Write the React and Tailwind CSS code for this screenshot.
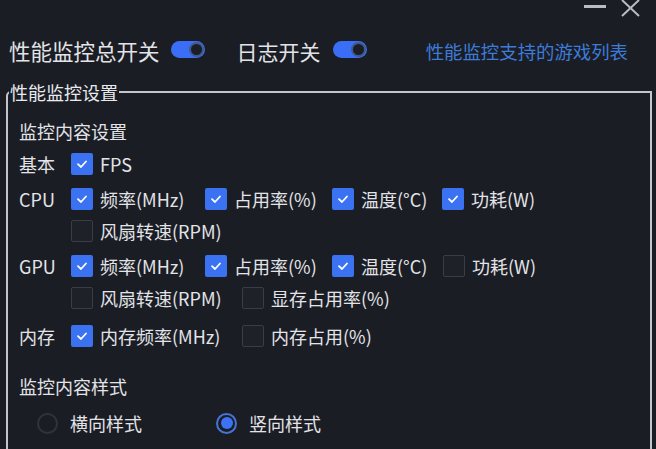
import React, { useState } from 'react';

const Toggle = ({ on }) => (
  <span className="relative inline-block w-[34px] h-[17px] rounded-full bg-[#3b6ef6] shrink-0">
    <span className="absolute right-[1px] top-[1px] w-[15px] h-[15px] rounded-full bg-[#1c1e26] border-2 border-[#41598c]" />
  </span>
);

const Check = ({ checked }) =>
  checked ? (
    <span className="flex items-center justify-center w-[22px] h-[22px] rounded-[2px] bg-[#3a72f2] shrink-0">
      <svg width="14" height="14" viewBox="0 0 14 14" fill="none">
        <path d="M3 7.2 L6 10 L11 4.5" stroke="white" strokeWidth="1.8" strokeLinecap="round" strokeLinejoin="round" />
      </svg>
    </span>
  ) : (
    <span className="w-[22px] h-[22px] rounded-[2px] border-[1.5px] border-[#3a3d45] bg-[#1f2128] shrink-0" />
  );

const Item = ({ checked, label, w }) => (
  <div className={`flex items-center gap-[7px] ${w}`}>
    <Check checked={checked} />
    <span className="text-[18px] text-[#e2e4e8] whitespace-nowrap">{label}</span>
  </div>
);

const Line = ({ label, children, className = '' }) => (
  <div className={`flex items-center h-[32px] ${className}`}>
    <span className="w-[52px] text-[18px] text-[#e2e4e8]">{label}</span>
    {children}
  </div>
);

const Radio = ({ checked, label }) => (
  <div className="flex items-center gap-[12px]">
    {checked ? (
      <span className="flex items-center justify-center w-[21px] h-[21px] rounded-full border-2 border-[#4673d6]">
        <span className="w-[12px] h-[12px] rounded-full bg-[#3c72f6]" />
      </span>
    ) : (
      <span className="w-[21px] h-[21px] rounded-full border-2 border-[#30333b]" />
    )}
    <span className="text-[18px] text-[#e2e4e8]">{label}</span>
  </div>
);

const App = () => {
  const [style] = useState('vertical');

  return (
    <div
      className="w-[656px] h-[449px] overflow-hidden bg-[#1b1d24] text-[#e2e4e8]"
      style={{ fontFamily: '"Noto Sans CJK SC", "Noto Sans", sans-serif' }}
    >
      <div className="h-[37px] flex justify-end items-start pr-[15px] gap-[14px]">
        <span className="mt-[5px] w-[22px] h-[3px] bg-[#b9bcc3]" />
        <svg width="21" height="17" viewBox="0 0 21 17">
          <path d="M2 0 L19 16 M19 0 L2 16" stroke="#b9bcc3" strokeWidth="2" />
        </svg>
      </div>

      <div className="h-[28px] flex items-center pl-[9px]">
        <span className="text-[21.5px] leading-none">性能监控总开关</span>
        <span className="ml-[11px]"><Toggle on /></span>
        <span className="ml-[32px] text-[21px] leading-none">日志开关</span>
        <span className="ml-[12px]"><Toggle on /></span>
        <a className="ml-auto mr-[28px] text-[18.4px] text-[#3d7bd9] leading-none">性能监控支持的游戏列表</a>
      </div>

      <fieldset className="mt-[15px] ml-[6px] w-[646px] h-[420px] border-2 border-[#c3c6cc] rounded-tl-[5px] pl-[1px]">
        <legend className="px-[1px] text-[18px] leading-[24px] text-[#e8eaee]">性能监控设置</legend>
        <div className="pl-[10px] pt-[15px]">
          <div className="text-[18px] leading-[24px]">监控内容设置</div>

          <Line label="基本" className="mt-[5px]">
            <Item checked label="FPS" />
          </Line>

          <div className="mt-[3px]">
            <Line label="CPU">
              <Item checked label="频率(MHz)" w="w-[134px]" />
              <Item checked label="占用率(%)" w="w-[127px]" />
              <Item checked label="温度(°C)" w="w-[110px]" />
              <Item checked label="功耗(W)" />
            </Line>
            <Line label="">
              <Item label="风扇转速(RPM)" />
            </Line>
          </div>

          <div className="mt-[3px]">
            <Line label="GPU">
              <Item checked label="频率(MHz)" w="w-[134px]" />
              <Item checked label="占用率(%)" w="w-[127px]" />
              <Item checked label="温度(°C)" w="w-[111px]" />
              <Item label="功耗(W)" />
            </Line>
            <Line label="">
              <Item label="风扇转速(RPM)" w="w-[171px]" />
              <Item label="显存占用率(%)" />
            </Line>
          </div>

          <Line label="内存" className="mt-[6px]">
            <Item checked label="内存频率(MHz)" w="w-[171px]" />
            <Item label="内存占用(%)" />
          </Line>

          <div className="mt-[22px] text-[18px] leading-[24px]">监控内容样式</div>
          <div className="mt-[9px] h-[32px] flex items-center pl-[18px] gap-[74px]">
            <Radio checked={style === 'horizontal'} label="横向样式" />
            <Radio checked={style === 'vertical'} label="竖向样式" />
          </div>
        </div>
      </fieldset>
    </div>
  );
};

export default App;
